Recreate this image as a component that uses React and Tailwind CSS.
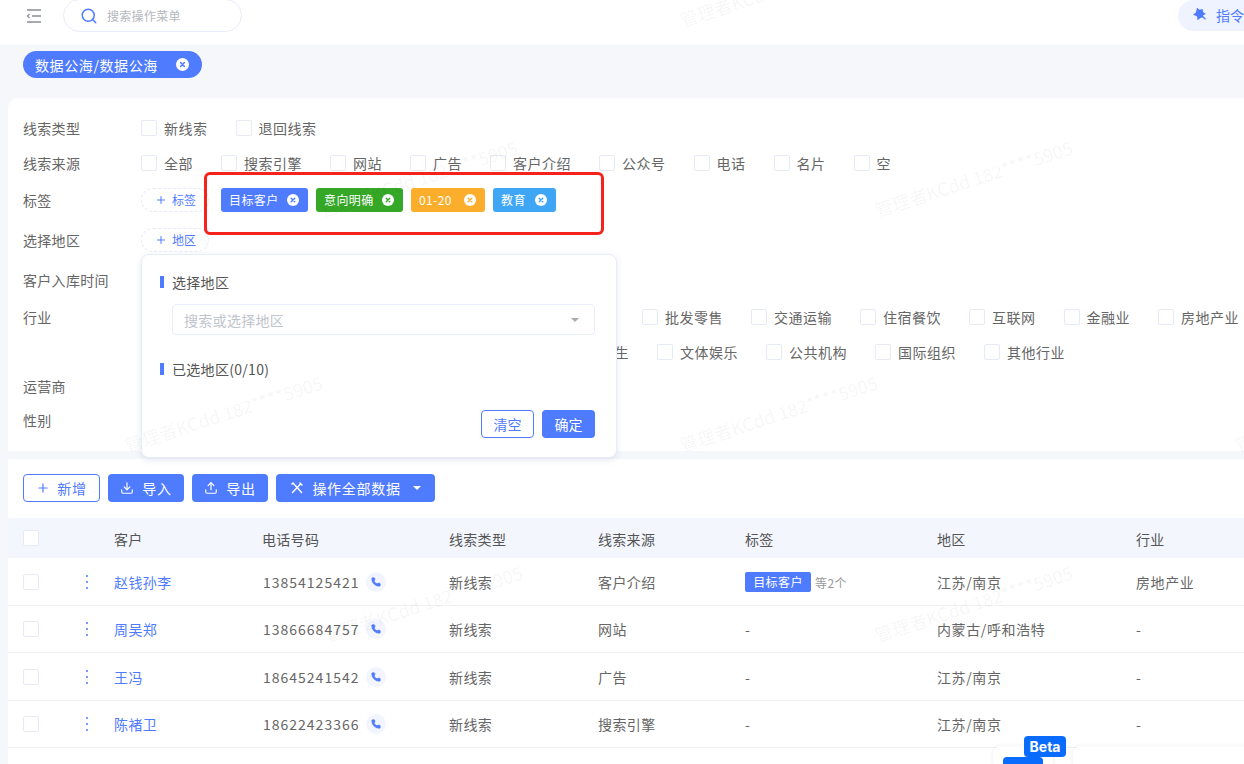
import React from 'react'
import {Search, Plus, Download, Upload, Phone} from 'lucide-react'

const cjk = "font-['Noto_Sans_CJK_SC','Noto_Sans',sans-serif]"

const marks = [
    'left-[680px] top-[6px]',
    'left-[875px] top-[196px]',
    'left-[320px] top-[196px]',
    'left-[125px] top-[431px]',
    'left-[680px] top-[431px]',
    'left-[1235px] top-[431px]',
    'left-[325px] top-[621px]',
    'left-[875px] top-[621px]',
]

const rows = [
    {name: '赵钱孙李', phone: '13854125421', source: '客户介绍', tag: true, region: '江苏/南京', industry: '房地产业'},
    {name: '周吴郑', phone: '13866684757', source: '网站', region: '内蒙古/呼和浩特', industry: '-'},
    {name: '王冯', phone: '18645241542', source: '广告', region: '江苏/南京', industry: '-'},
    {name: '陈褚卫', phone: '18622423366', source: '搜索引擎', region: '江苏/南京', industry: '-'},
]

const cols = 'grid grid-cols-[54px_52px_148px_187px_149px_147px_192px_199px_1fr]'

function CloseDot({className = 'text-[#4f7bff]', size = 12}) {
    return (
        <svg width={size} height={size} viewBox="0 0 12 12" className={className}>
            <circle cx="6" cy="6" r="6" fill="white"/>
            <path d="M4.2 4.2l3.6 3.6M7.8 4.2l-3.6 3.6" stroke="currentColor" strokeWidth="1.4" strokeLinecap="round"/>
        </svg>
    )
}

function Check({label}) {
    return (
        <label className="flex items-center shrink-0 mr-[28px]">
            <span className="w-4 h-4 rounded-[2px] border border-[#e6eaf5] bg-white mr-[7px]"/>
            <span className="tracking-[0.5px]">{label}</span>
        </label>
    )
}

function Row({label, h, children}) {
    return (
        <div className={`flex items-center ${h}`}>
            <div className="w-[118px] shrink-0 tracking-[0.3px]">{label}</div>
            {children}
        </div>
    )
}

function AddBtn({label}) {
    return (
        <div className="flex items-center w-[68px] h-[24px] pl-[13px] rounded-full border border-dashed border-[#e6eaf5] text-[#4f7bff] text-xs shrink-0">
            <Plus size={12} className="mr-[5px]"/>{label}
        </div>
    )
}

function Tag({bg, fg, label, w}) {
    return (
        <div className={`flex items-center justify-between h-6 pl-2 pr-[4px] mr-2 rounded-[3px] text-white text-xs tracking-[0.4px] ${bg} ${w}`}>
            <span>{label}</span>
            <span className="mr-[5px]"><CloseDot size={12} className={fg}/></span>
        </div>
    )
}

function Btn({icon, label, w, children}) {
    return (
        <button className={`flex items-center justify-center h-7 mr-2 rounded-[4px] bg-[#4f7bff] text-white ${w}`}>
            {icon}
            <span className="ml-[8px] tracking-[0.7px]">{label}</span>
            {children}
        </button>
    )
}

function Box() {
    return <span className="block w-4 h-4 rounded-[2px] border border-[#e6eaf5] bg-white"/>
}

export default function App() {
    return (
        <div className={`relative w-[1244px] h-[764px] overflow-hidden bg-[#f6f7fa] text-sm text-[#666] ${cjk}`}>
            {/* top bar */}
            <div className="flex items-center justify-between h-[45px] pb-[14px] bg-white">
                <div className="flex items-center">
                    <svg width="16" height="14" viewBox="0 0 16 14" className="ml-[26px] text-[#8a8f99]" fill="none" stroke="currentColor" strokeWidth="1.3">
                        <path d="M1 1h14M6 7h9M1 13h14M3.5 5L1.500 7l2 2"/>
                    </svg>
                    <div className="flex items-center w-[179px] h-[33px] ml-[21px] pl-[16px] rounded-full border border-[#e8ecf8] bg-white text-xs text-[#b4b7bd] tracking-[0.3px]">
                        <Search size={18} className="text-[#4f7bff] mr-[9px]"/>搜索操作菜单
                    </div>
                </div>
                <div className="flex items-center w-[66px] h-[31px] pl-[14px] pb-[2px] rounded-l-full bg-[#eff3ff] text-[#4f7bff]">
                    <svg width="15" height="15" viewBox="0 0 15 15" className="mr-[9px] shrink-0" fill="currentColor">
                        <path d="M5 .8l2.600 2 3-.7.5 3 2.600 1.900-2.700 1.400.6 1.200 2.300 2.200-.8.9-2.600-2.300-1.600.3-3.400 2.600L5 9.300 1 7.800l2.900-2.300z"/>
                    </svg>
                    <span className="whitespace-nowrap">指令</span>
                </div>
            </div>

            {/* opened page tab */}
            <div className="h-[53px] pt-[6px] pl-[23px]">
                <div className="flex items-center justify-between w-[179px] h-[27px] pl-3 pr-[13px] rounded-full bg-[#4f7bff] text-white tracking-[0.6px]">
                    <span>数据公海/数据公海</span>
                    <CloseDot size={13}/>
                </div>
            </div>

            <div className="pl-2">
                {/* filters */}
                <div className="h-[353px] pt-[12px] pl-[15px] rounded-tl-[10px] bg-white">
                    <Row label="线索类型" h="h-[35px]">
                        <Check label="新线索"/>
                        <Check label="退回线索"/>
                    </Row>
                    <Row label="线索来源" h="h-[35px]">
                        {['全部', '搜索引擎', '网站', '广告', '客户介绍', '公众号', '电话', '名片', '空'].map(s => <Check key={s} label={s}/>)}
                    </Row>
                    <Row label="标签" h="h-[40px]">
                        <AddBtn label="标签"/>
                        <div className="flex ml-[12px]">
                            <Tag bg="bg-[#4f7bff]" fg="text-[#4f7bff]" label="目标客户" w="w-[87px]"/>
                            <Tag bg="bg-[#35a827]" fg="text-[#35a827]" label="意向明确" w="w-[87px]"/>
                            <Tag bg="bg-[#fbae2c]" fg="text-[#fbae2c]" label="01-20" w="w-[74px]"/>
                            <Tag bg="bg-[#3fa6f5]" fg="text-[#3fa6f5]" label="教育" w="w-[63px]"/>
                        </div>
                    </Row>
                    <Row label="选择地区" h="h-[40px]"><AddBtn label="地区"/></Row>
                    <Row label="客户入库时间" h="h-[40px]"/>
                    <Row label="行业" h="h-[33px]">
                        <div className="flex ml-[501px]">
                            {['批发零售', '交通运输', '住宿餐饮', '互联网', '金融业', '房地产业'].map(s => <Check key={s} label={s}/>)}
                        </div>
                    </Row>
                    <Row label="" h="h-[38px]">
                        <div className="flex ml-[436px]">
                            {['卫生', '文体娱乐', '公共机构', '国际组织', '其他行业'].map(s => <Check key={s} label={s}/>)}
                        </div>
                    </Row>
                    <Row label="运营商" h="h-[30px]"/>
                    <Row label="性别" h="h-[38px]"/>
                </div>

                {/* table */}
                <div className="h-[305px] mt-2 bg-white">
                    <div className="flex pt-[15px] pl-[15px] mb-4">
                        <button className="flex items-center justify-center w-[77px] h-7 mr-2 rounded-[4px] border border-[#4f7bff] text-[#4f7bff]">
                            <Plus size={14}/><span className="ml-[7px] tracking-[0.7px]">新增</span>
                        </button>
                        <Btn icon={<Download size={14}/>} label="导入" w="w-[76px]"/>
                        <Btn icon={<Upload size={14}/>} label="导出" w="w-[76px]"/>
                        <Btn w="w-[159px]" label="操作全部数据" icon={
                            <svg width="14" height="14" viewBox="0 0 14 14" fill="none" stroke="currentColor" strokeWidth="1.4">
                                <path d="M2 12L11 2.500M3 2l9 10M1.500 3.500l2-2M9.500 1.500l3 3"/>
                            </svg>
                        }>
                            <span className="ml-[12px] border-x-[4px] border-t-[4px] border-x-transparent border-t-white"/>
                        </Btn>
                    </div>

                    <div className={`${cols} h-10 items-center bg-[#f3f6fd] text-[#555] tracking-[0.3px]`}>
                        <div className="pl-[15px]"><Box/></div>
                        <div/>
                        <div className="pt-px">客户</div>
                        <div className="pt-px">电话号码</div>
                        <div className="pt-px">线索类型</div>
                        <div className="pt-px">线索来源</div>
                        <div className="pt-px">标签</div>
                        <div className="pt-px">地区</div>
                        <div className="pt-px">行业</div>
                    </div>
                    {rows.map(r => (
                        <div key={r.phone} className={`${cols} h-[47.5px] pt-px items-center border-b border-[#eef0f4] tracking-[0.4px]`}>
                            <div className="pl-[15px]"><Box/></div>
                            <div className="pl-[24px]">
                                <svg width="2" height="14" viewBox="0 0 2 14" fill="#4f7bff" className="block">
                                    <rect width="2" height="2" rx="1"/>
                                    <rect y="6" width="2" height="2" rx="1"/>
                                    <rect y="12" width="2" height="2" rx="1"/>
                                </svg>
                            </div>
                            <div className="text-[#4f7bff]">{r.name}</div>
                            <div className="flex items-center pl-px tracking-[1px]">
                                {r.phone}
                                <span className="flex items-center justify-center w-5 h-5 ml-[7px] rounded-full bg-[#f2f5ff]">
                                    <Phone size={10} fill="#4f7bff" className="text-[#4f7bff]"/>
                                </span>
                            </div>
                            <div>新线索</div>
                            <div>{r.source}</div>
                            <div className="flex items-center">
                                {r.tag ? (
                                    <>
                                        <span className="flex items-center justify-center w-[66px] h-5 rounded-[2px] bg-[#4f7bff] text-white text-xs">目标客户</span>
                                        <span className="ml-1 mt-[3px] text-xs text-[#999]">等2个</span>
                                    </>
                                ) : '-'}
                            </div>
                            <div className="tracking-[0.6px]">{r.region}</div>
                            <div className="tracking-[0.6px]">{r.industry}</div>
                        </div>
                    ))}
                </div>
            </div>

            {/* region popover */}
            <div className="absolute left-[141px] top-[254px] w-[476px] h-[204px] pl-[18px] pr-[21px] rounded-lg border border-[#e9edfa] bg-white shadow-[0_2px_6px_rgba(80,100,180,0.15)]">
                <div className="flex items-center h-[18px] mt-[18px] text-[#555] tracking-[0.3px]">
                    <span className="w-1 h-3 mr-2 bg-[#4f7bff]"/>选择地区
                </div>
                <div className="flex items-center justify-between h-[31px] ml-3 mt-[13px] pl-[11px] pr-[15px] rounded-[4px] border border-[#e9edfa] text-[#c0c4cc] tracking-[0.3px]">
                    <span>搜索或选择地区</span>
                    <span className="border-x-[4px] border-t-[4px] border-x-transparent border-t-[#a8abb2]"/>
                </div>
                <div className="flex items-center h-[18px] mt-[25px] text-[#555] tracking-[0.3px]">
                    <span className="w-1 h-3 mr-2 bg-[#4f7bff]"/>已选地区(0/10)
                </div>
                <div className="flex justify-end mt-[32px]">
                    <button className="w-[53px] h-7 mr-2 rounded-[4px] border border-[#4f7bff] text-[#4f7bff]">清空</button>
                    <button className="w-[53px] h-7 rounded-[4px] bg-[#4f7bff] text-white">确定</button>
                </div>
            </div>

            {/* red annotation box */}
            <div className="absolute left-[204px] top-[172px] w-[400px] h-[63px] rounded-[6px] border-[3px] border-[#f5231b]"/>

            {/* floating bottom widgets */}
            <div className="absolute left-[993px] top-[746px] w-[60px] h-5 rounded-t-lg bg-white shadow-[0_0_4px_rgba(0,0,0,0.08)]">
                <div className="w-10 h-5 mt-[11px] ml-[10px] rounded-t-[4px] bg-[#0a6cff]"/>
            </div>
            <div className="absolute left-[1024px] top-[736px] flex items-center justify-center w-[42px] h-[21px] rounded-[4px] bg-[#0a6cff] text-white text-sm font-bold font-['Inter',sans-serif]">Beta</div>
            <div className="absolute left-[1073px] top-[746px] w-[180px] h-5 rounded-t-lg bg-white shadow-[0_0_4px_rgba(0,0,0,0.08)]"/>

            {/* watermark */}
            {marks.map(m => (
                <div key={m} className={`absolute ${m} -rotate-[18deg] origin-left text-lg whitespace-nowrap text-black/[0.05] pointer-events-none`}>管理者KCdd 182****5905</div>
            ))}
        </div>
    )
}
